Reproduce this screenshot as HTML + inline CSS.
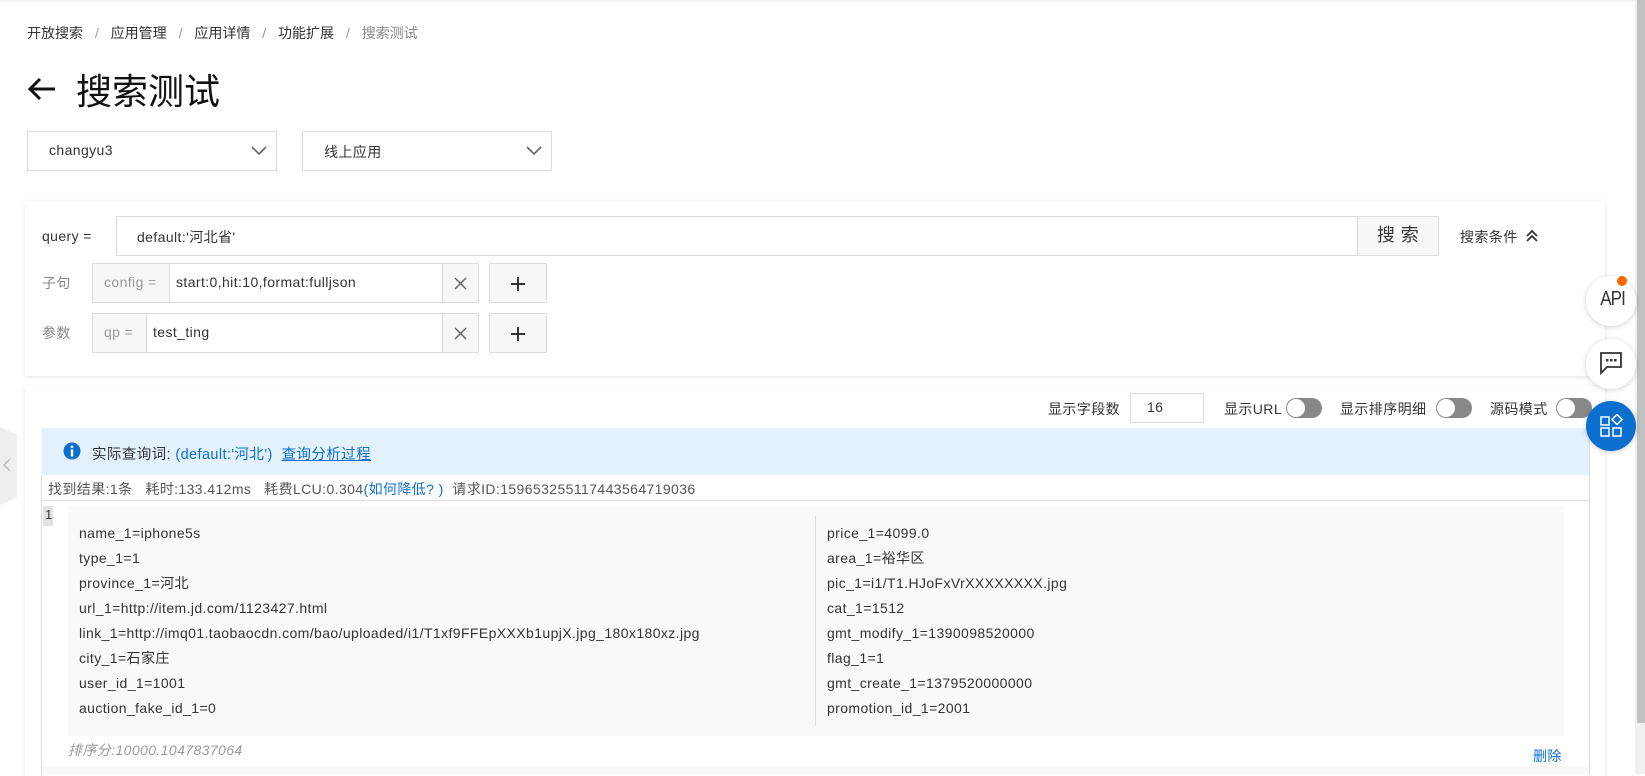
<!DOCTYPE html>
<html><head><meta charset="utf-8"><style>
*{box-sizing:border-box;margin:0;padding:0}
body{width:1645px;height:774px;overflow:hidden;background:#fff;font-family:"Liberation Sans","Noto Sans CJK SC",sans-serif;color:#333;font-size:14px;position:relative;letter-spacing:.4px}
.a{position:absolute}
.panel{position:absolute;background:#fff;box-shadow:0 1px 4px rgba(0,0,0,.12)}
.box{position:absolute;border:1px solid #dcdcdc;background:#fff}
.gray{background:#f7f7f7}
.line{position:absolute;font-size:14px;color:#333;white-space:nowrap}
.tog{position:absolute;width:36px;height:20px;border-radius:10px;background:#888}
.tog:after{content:"";position:absolute;left:1px;top:1px;width:18px;height:18px;border-radius:50%;background:#fff}
.circ{position:absolute;width:50px;height:50px;border-radius:50%;background:#fff;box-shadow:0 1px 6px rgba(0,0,0,.18)}
</style></head><body>
<div class="a" style="left:0;top:0;width:1635px;height:3px;background:linear-gradient(#eee,#fff)"></div>
<div class="a" style="left:1635px;top:0;width:10px;height:774px;background:#f0f0f0"></div>
<div class="a" style="left:1637px;top:0;width:8px;height:723px;background:#c1c1c1"></div>

<div class="a" style="left:27px;top:23px;font-size:14px;color:#333;white-space:nowrap;letter-spacing:0">开放搜索 <span style="color:#999;margin:0 8px">/</span> 应用管理 <span style="color:#999;margin:0 8px">/</span> 应用详情 <span style="color:#999;margin:0 8px">/</span> 功能扩展 <span style="color:#999;margin:0 8px">/</span> <span style="color:#888">搜索测试</span></div>
<svg class="a" style="left:27px;top:76px" width="30" height="26" viewBox="0 0 30 26"><path d="M28 13H3M13 3L3 13l10 10" stroke="#111" stroke-width="3" fill="none"/></svg>
<div class="a" style="left:76px;top:63px;font-size:36px;color:#111;letter-spacing:0">搜索测试</div>

<div class="box" style="left:27px;top:131px;width:250px;height:40px"><span class="a" style="left:21px;top:10px">changyu3</span>
<svg class="a" style="left:223px;top:14px" width="16" height="10"><path d="M1 1l7 7 7-7" stroke="#666" stroke-width="1.6" fill="none"/></svg></div>
<div class="box" style="left:302px;top:131px;width:250px;height:40px"><span class="a" style="left:21px;top:10px">线上应用</span>
<svg class="a" style="left:223px;top:14px" width="16" height="10"><path d="M1 1l7 7 7-7" stroke="#666" stroke-width="1.6" fill="none"/></svg></div>

<div class="panel" style="left:25px;top:201px;width:1580px;height:175px"></div>
<div class="a" style="left:42px;top:228px">query =</div>
<div class="box" style="left:116px;top:216px;width:1242px;height:40px"><span class="a" style="left:20px;top:10px">default:'河北省'</span></div>
<div class="box gray" style="left:1357px;top:216px;width:82px;height:40px;font-size:18px;text-align:center;line-height:37px;color:#333">搜 索</div>
<div class="a" style="left:1460px;top:227px">搜索条件</div>
<svg class="a" style="left:1525px;top:229px" width="14" height="14"><path d="M2 7l5-5 5 5M2 12l5-5 5 5" stroke="#333" stroke-width="1.8" fill="none"/></svg>

<div class="a" style="left:42px;top:273px;color:#888">子句</div>
<div class="box gray" style="left:92px;top:263px;width:78px;height:40px;color:#999;padding:10px 0 0 11px">config =</div>
<div class="box" style="left:169px;top:263px;width:274px;height:40px;padding:10px 0 0 6px">start:0,hit:10,format:fulljson</div>
<div class="box gray" style="left:442px;top:263px;width:37px;height:40px"><svg class="a" style="left:11px;top:13px" width="13" height="13"><path d="M1 1l11 11M12 1L1 12" stroke="#666" stroke-width="1.5"/></svg></div>
<div class="box gray" style="left:489px;top:263px;width:58px;height:40px"><svg class="a" style="left:21px;top:13px" width="14" height="14"><path d="M7 0v14M0 7h14" stroke="#333" stroke-width="2"/></svg></div>

<div class="a" style="left:42px;top:323px;color:#888">参数</div>
<div class="box gray" style="left:92px;top:313px;width:55px;height:40px;color:#999;padding:10px 0 0 11px">qp =</div>
<div class="box" style="left:146px;top:313px;width:297px;height:40px;padding:10px 0 0 6px">test_ting</div>
<div class="box gray" style="left:442px;top:313px;width:37px;height:40px"><svg class="a" style="left:11px;top:13px" width="13" height="13"><path d="M1 1l11 11M12 1L1 12" stroke="#666" stroke-width="1.5"/></svg></div>
<div class="box gray" style="left:489px;top:313px;width:58px;height:40px"><svg class="a" style="left:21px;top:13px" width="14" height="14"><path d="M7 0v14M0 7h14" stroke="#333" stroke-width="2"/></svg></div>

<div class="panel" style="left:25px;top:386px;width:1580px;height:390px"></div>
<div class="a" style="left:0;top:427px;width:17px;height:78px;background:#eee;clip-path:polygon(0 0,100% 10%,100% 90%,0 100%)"></div>
<svg class="a" style="left:3px;top:458px" width="8" height="14"><path d="M7 1L1 7l6 6" stroke="#bbb" stroke-width="1.5" fill="none"/></svg>

<div class="a" style="left:1048px;top:399px">显示字段数</div>
<div class="box" style="left:1130px;top:393px;width:74px;height:30px;padding:5px 0 0 16px">16</div>
<div class="a" style="left:1224px;top:399px">显示URL</div><div class="tog" style="left:1286px;top:398px"></div>
<div class="a" style="left:1340px;top:399px">显示排序明细</div><div class="tog" style="left:1436px;top:398px"></div>
<div class="a" style="left:1490px;top:399px">源码模式</div><div class="tog" style="left:1556px;top:398px"></div>

<div class="a" style="left:42px;top:428px;width:1548px;height:47px;background:#e3f1fd"></div>
<div class="a" style="left:41px;top:475px;width:1px;height:300px;background:#ddd"></div>
<div class="a" style="left:1589px;top:428px;width:1px;height:346px;background:#ddd"></div>
<svg class="a" style="left:63px;top:442px" width="18" height="18"><circle cx="9" cy="9" r="8.5" fill="#0b6fd0"/><rect x="7.8" y="7.5" width="2.4" height="7" fill="#fff"/><circle cx="9" cy="4.8" r="1.4" fill="#fff"/></svg>
<div class="a" style="left:92px;top:443px;color:#333;font-size:14.5px">实际查询词: <span style="color:#0b6fd0">(default:'河北')</span> &nbsp;<span style="color:#0b6fd0;text-decoration:underline">查询分析过程</span></div>
<div class="a" style="left:48px;top:479px;color:#555;white-space:nowrap">找到结果:1条 &nbsp; 耗时:133.412ms &nbsp; 耗费LCU:0.304<span style="color:#0b6fd0">(如何降低? )</span> &nbsp;请求ID:159653255117443564719036</div>
<div class="a" style="left:41px;top:500px;width:1549px;height:1px;background:#ddd"></div>

<div class="a" style="left:43px;top:506px;width:10px;height:20px;background:#e2e2e2;font-size:13px;padding:1px 0 0 2px">1</div>
<div class="a" style="left:68px;top:506px;width:1496px;height:230px;background:#f9f9f9"></div>
<div class="a" style="left:815px;top:516px;width:1px;height:210px;background:#ddd"></div>
<div class="line" style="left:79px;top:521px;line-height:25px">name_1=iphone5s<br>type_1=1<br>province_1=河北<br>url_1=http://item.jd.com/1123427.html<br>link_1=http://imq01.taobaocdn.com/bao/uploaded/i1/T1xf9FFEpXXXb1upjX.jpg_180x180xz.jpg<br>city_1=石家庄<br>user_id_1=1001<br>auction_fake_id_1=0</div>
<div class="line" style="left:827px;top:521px;line-height:25px">price_1=4099.0<br>area_1=裕华区<br>pic_1=i1/T1.HJoFxVrXXXXXXXX.jpg<br>cat_1=1512<br>gmt_modify_1=1390098520000<br>flag_1=1<br>gmt_create_1=1379520000000<br>promotion_id_1=2001</div>
<div class="a" style="left:68px;top:740px;color:#999;font-style:italic">排序分:10000.1047837064</div>
<div class="a" style="left:1533px;top:746px;color:#0b6fd0">删除</div>
<div class="a" style="left:42px;top:766px;width:1547px;height:8px;background:#f7f7f7"></div>

<div class="circ" style="left:1586px;top:276px"><span class="a" style="left:12px;top:12px;font-size:20px;color:#333;letter-spacing:-1px;transform:scaleX(.85)">API</span></div>
<div class="a" style="left:1617px;top:276px;width:10px;height:10px;border-radius:50%;background:#f60"></div>
<div class="circ" style="left:1586px;top:339px"><svg class="a" style="left:14px;top:13px" width="22" height="23"><path d="M1 1h20v14H7l-6 6z" stroke="#333" stroke-width="1.8" fill="none"/><rect x="6" y="7" width="2.5" height="2.5" fill="#333"/><rect x="10" y="7" width="2.5" height="2.5" fill="#333"/><rect x="14" y="7" width="2.5" height="2.5" fill="#333"/></svg></div>
<div class="circ" style="left:1586px;top:401px;background:#0b6fd0"><svg class="a" style="left:14px;top:13px" width="24" height="24"><rect x="1" y="3" width="8" height="8" stroke="#fff" stroke-width="1.5" fill="none"/><rect x="1" y="14" width="8" height="8" stroke="#fff" stroke-width="1.5" fill="none"/><rect x="13" y="14" width="8" height="8" stroke="#fff" stroke-width="1.5" fill="none"/><path d="M17 0.5l5 5-5 5-5-5z" stroke="#fff" stroke-width="1.5" fill="none"/></svg></div>
</body></html>
